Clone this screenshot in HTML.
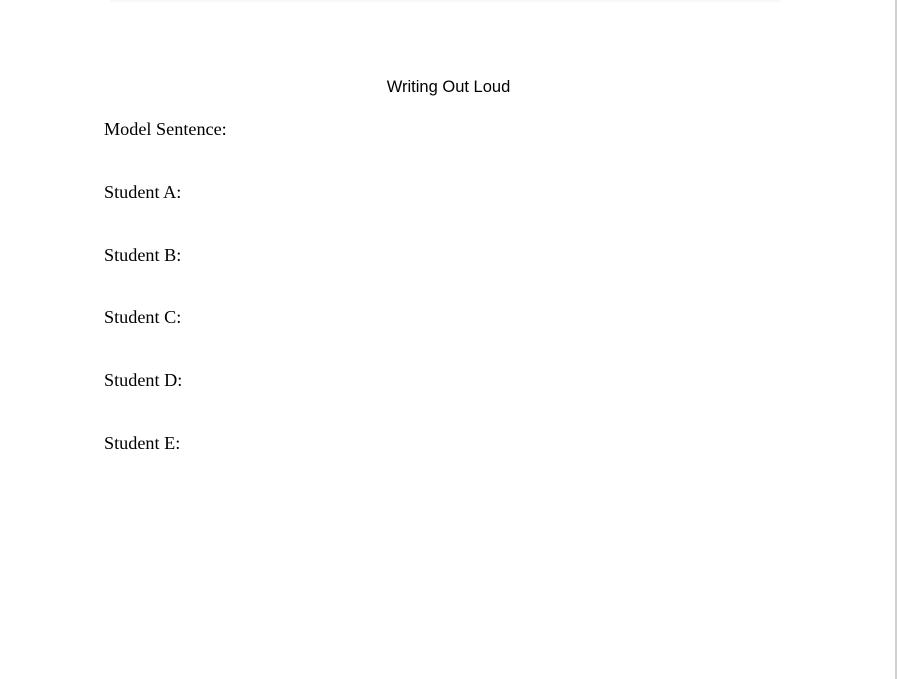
<!DOCTYPE html>
<html><head><meta charset="utf-8"><style>
html,body{margin:0;padding:0;background:#fff;width:897px;height:679px;overflow:hidden;position:relative}
.edge{position:absolute;right:0;top:0;width:2px;height:679px;background:#d0d0d0}
.topshade{position:absolute;left:110px;top:0;width:670px;height:3px;background:linear-gradient(#f6f6f6,#fff)}
.title{position:absolute;left:0;width:897px;text-align:center;top:78px;font:16.5px "Liberation Sans",sans-serif;color:#000}
.l{position:absolute;left:104px;font:18.2px "Liberation Serif",serif;color:#000;line-height:20px}
</style></head><body>
<div class="topshade"></div>
<div class="edge"></div>
<div class="title">Writing Out Loud</div>
<div class="l" style="top:119px">Model Sentence:</div>
<div class="l" style="top:182px">Student A:</div>
<div class="l" style="top:245px">Student B:</div>
<div class="l" style="top:307px">Student C:</div>
<div class="l" style="top:370px">Student D:</div>
<div class="l" style="top:433px">Student E:</div>
</body></html>
